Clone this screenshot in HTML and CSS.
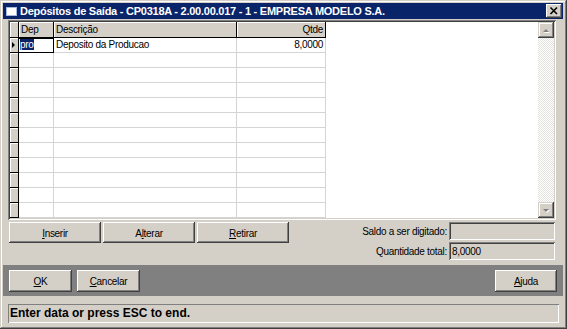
FILE: index.html
```html
<!DOCTYPE html>
<html lang="pt">
<head>
<meta charset="utf-8">
<title>Depósitos de Saída</title>
<link rel="stylesheet" href="styles.css">
</head>
<body>
<div class="window">
  <div class="titlebar">
    <span class="ticon"></span>
    <span class="title">Depósitos de Saída - CP0318A - 2.00.00.017 - 1 - EMPRESA MODELO S.A.</span>
    <span class="close">
      <svg width="16" height="14" viewBox="0 0 16 14"><path d="M4.5 3.5 L11 10 M11 3.5 L4.5 10" stroke="#000" stroke-width="1.6" fill="none"/></svg>
    </span>
  </div>
  <div class="content">
    <div class="gridframe">
      <div class="grid">
        <div class="row hdr">
          <div class="ind"></div>
          <div class="h">Dep</div>
          <div class="h">Descrição</div>
          <div class="h right">Qtde</div>
        </div>
        <div class="row">
          <div class="ind cur"><svg width="8" height="14" viewBox="0 0 8 14"><path d="M2 4 L5 7 L2 10 Z" fill="#000"/></svg></div>
          <div class="c edit"><span class="sel">pro</span></div>
          <div class="c">Deposito da Producao</div>
          <div class="c right">8,0000</div>
        </div>
        <div class="row"><div class="ind"></div><div class="c"></div><div class="c"></div><div class="c"></div></div>
        <div class="row"><div class="ind"></div><div class="c"></div><div class="c"></div><div class="c"></div></div>
        <div class="row"><div class="ind"></div><div class="c"></div><div class="c"></div><div class="c"></div></div>
        <div class="row"><div class="ind"></div><div class="c"></div><div class="c"></div><div class="c"></div></div>
        <div class="row"><div class="ind"></div><div class="c"></div><div class="c"></div><div class="c"></div></div>
        <div class="row"><div class="ind"></div><div class="c"></div><div class="c"></div><div class="c"></div></div>
        <div class="row"><div class="ind"></div><div class="c"></div><div class="c"></div><div class="c"></div></div>
        <div class="row"><div class="ind"></div><div class="c"></div><div class="c"></div><div class="c"></div></div>
        <div class="row"><div class="ind"></div><div class="c"></div><div class="c"></div><div class="c"></div></div>
        <div class="row"><div class="ind"></div><div class="c"></div><div class="c"></div><div class="c"></div></div>
        <div class="row"><div class="ind"></div><div class="c"></div><div class="c"></div><div class="c"></div></div>
      </div>
      <div class="scrollbar">
        <div class="sbtn"><svg width="16" height="16" viewBox="0 0 16 16"><path d="M5 10 L8 7 L11 10 Z" fill="#fff" transform="translate(1 1)"/><path d="M5 10 L8 7 L11 10 Z" fill="#808080"/></svg></div>
        <div class="track"></div>
        <div class="sbtn"><svg width="16" height="16" viewBox="0 0 16 16"><path d="M5 7 L8 10 L11 7 Z" fill="#fff" transform="translate(1 1)"/><path d="M5 7 L8 10 L11 7 Z" fill="#808080"/></svg></div>
      </div>
    </div>
    <div class="actions">
      <div class="btnrow">
        <div class="btn wide"><u>I</u>nserir</div>
        <div class="btn wide">A<u>l</u>terar</div>
        <div class="btn wide"><u>R</u>etirar</div>
      </div>
      <div class="fields">
        <div class="frow"><span class="lbl">Saldo a ser digitado:</span><span class="field"></span></div>
        <div class="frow"><span class="lbl">Quantidade total:</span><span class="field">8,0000</span></div>
      </div>
    </div>
  </div>
  <div class="band">
    <div class="btn small"><u>O</u>K</div>
    <div class="btn small"><u>C</u>ancelar</div>
    <div class="btn small push"><u>A</u>juda</div>
  </div>
  <div class="status">Enter data or press ESC to end.</div>
</div>
</body>
</html>
```

FILE: styles.css
```css
html, body {
  margin: 0;
  padding: 0;
  background: #d4d0c8;
}
body {
  font-family: "Liberation Sans", Arial, sans-serif;
  font-size: 10px;
  letter-spacing: -0.3px;
  color: #000;
}
.window {
  width: 567px;
  height: 329px;
  box-sizing: border-box;
  padding: 3px 4px 4px 3px;
  display: flex;
  flex-direction: column;
  background: #d4d0c8;
  box-shadow: inset -1px -1px #404040, inset 1px 1px #d4d0c8, inset -2px -2px #808080, inset 2px 2px #fff;
}
.titlebar {
  height: 16px;
  flex: none;
  background: #0a246a;
  display: flex;
  align-items: center;
  color: #fff;
}
.ticon {
  width: 11px;
  height: 9px;
  margin-left: 3px;
  background: #fff;
  box-sizing: border-box;
  border: 1px solid #a6b8e0;
}
.title {
  margin-left: 3px;
  font-size: 11px;
  font-weight: bold;
  letter-spacing: -0.25px;
  white-space: nowrap;
}
.close {
  margin-left: auto;
  margin-right: 1px;
  width: 16px;
  height: 14px;
  background: #d4d0c8;
  box-shadow: inset -1px -1px #404040, inset 1px 1px #fff, inset -2px -2px #808080;
  display: flex;
}
.content {
  padding: 1px 7px 0 5px;
  flex: none;
}
.gridframe {
  width: 548px;
  height: 200px;
  box-sizing: border-box;
  padding: 2px;
  display: flex;
  background: #fff;
  box-shadow: inset 1px 1px #808080, inset -1px -1px #fff, inset 2px 2px #404040, inset -2px -2px #d4d0c8;
}
.grid {
  flex: 1;
  background: #fff;
}
.row {
  display: grid;
  grid-template-columns: 9px 35px 183px 89px;
  height: 15px;
}
.row.hdr {
  height: 16px;
}
.row > div {
  box-sizing: border-box;
  white-space: nowrap;
  overflow: hidden;
}
.ind {
  background: #d4d0c8;
  border-right: 1px solid #000;
  border-bottom: 1px solid #000;
  box-shadow: inset 1px 1px #fff;
}
.ind svg {
  display: block;
}
.h {
  background: #d4d0c8;
  border-right: 1px solid #000;
  border-bottom: 1px solid #000;
  box-shadow: inset 1px 1px #fff;
  padding: 0 2px;
  line-height: 15px;
}
.c {
  border-right: 1px solid #d4d4d4;
  border-bottom: 1px solid #d4d4d4;
  padding: 0 2px;
  line-height: 14px;
}
.right {
  text-align: right;
}
.edit {
  border: 1px solid #000;
  border-left: none;
  padding-left: 1px;
  line-height: 12px;
}
.sel {
  background: #0a246a;
  color: #fff;
}
.scrollbar {
  width: 16px;
  display: flex;
  flex-direction: column;
}
.sbtn {
  height: 16px;
  flex: none;
  background: #d4d0c8;
  box-shadow: inset -1px -1px #404040, inset 1px 1px #d4d0c8, inset -2px -2px #808080, inset 2px 2px #fff;
}
.sbtn svg {
  display: block;
}
.track {
  flex: 1;
  background: repeating-conic-gradient(#fff 0 25%, #e4e2de 0 50%) 0 0 / 2px 2px;
}
.actions {
  margin-top: 2px;
  display: flex;
  justify-content: space-between;
}
.btnrow {
  display: flex;
  gap: 2px;
  margin-left: 1px;
}
.btn {
  height: 21px;
  box-sizing: border-box;
  background: #d4d0c8;
  box-shadow: inset -1px -1px #404040, inset 1px 1px #fff, inset -2px -2px #808080;
  display: flex;
  align-items: center;
  justify-content: center;
  padding-top: 1px;
}
.btn.wide {
  width: 92px;
}
.fields {
  display: flex;
  flex-direction: column;
  align-items: flex-end;
  gap: 2px;
}
.frow {
  display: flex;
  align-items: center;
  gap: 2px;
}
.lbl {
  white-space: nowrap;
}
.field {
  width: 106px;
  height: 18px;
  box-sizing: border-box;
  padding: 3px 3px 0;
  margin-right: 1px;
  line-height: 13px;
  box-shadow: inset 1px 1px #808080, inset -1px -1px #fff, inset 2px 2px #404040, inset -2px -2px #d4d0c8;
}
.band {
  margin-top: 5px;
  height: 31px;
  flex: none;
  box-sizing: border-box;
  padding: 5px 6px 0;
  background: #808080;
  display: flex;
  align-items: flex-start;
  gap: 5px;
}
.btn.small {
  width: 63px;
  height: 22px;
  box-shadow: inset -1px -1px #404040, inset 1px 1px #fff, inset -2px -2px #808080, inset 2px 2px #d4d0c8;
}
.btn.push {
  margin-left: auto;
  width: 62px;
}
.status {
  margin: 8px 4px 0 5px;
  height: 19px;
  flex: none;
  box-sizing: border-box;
  padding: 1px 2px 0;
  font-size: 12px;
  font-weight: bold;
  letter-spacing: 0;
  line-height: 17px;
  white-space: nowrap;
  box-shadow: inset 1px 1px #808080, inset -1px -1px #fff;
}
```
